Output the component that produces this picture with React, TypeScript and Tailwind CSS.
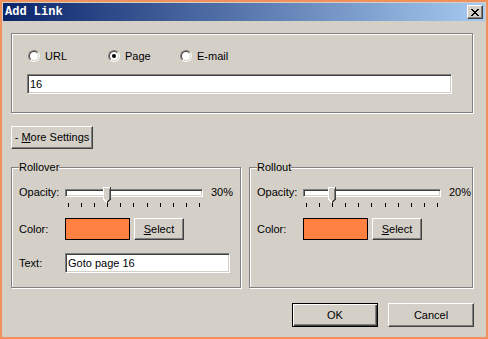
import React from "react"

const raised =
  "border border-t-white border-l-white border-r-[#404040] border-b-[#404040] shadow-[inset_-1px_-1px_0_#808080]"
const sunken =
  "border border-t-[#808080] border-l-[#808080] border-r-white border-b-white shadow-[inset_1px_1px_0_#404040,inset_-1px_-1px_0_#d4d0c8]"
const etched = "border border-[#808080] shadow-[inset_1px_1px_0_#fff,1px_1px_0_#fff]"

function CloseButton() {
  // 8x7 pixel X
  const rows = ["xx....xx", ".xx..xx.", "..xxxx..", "...xx...", "..xxxx..", ".xx..xx.", "xx....xx"]
  return (
    <div className={`flex h-[14px] w-[16px] items-center justify-center bg-[#d4d0c8] ${raised}`}>
      <svg width="8" height="7" viewBox="0 0 8 7" shapeRendering="crispEdges">
        {rows.map((r, y) =>
          r.split("").map((c, x) => (c === "x" ? <rect key={`${x}-${y}`} x={x} y={y} width="1" height="1" fill="#000" /> : null))
        )}
      </svg>
    </div>
  )
}

function Radio({ label, checked, width }: { label: string; checked?: boolean; width?: string }) {
  return (
    <div className={`flex h-[12px] items-center gap-[5px] ${width ?? ""}`}>
      <div className="h-[12px] w-[12px] shrink-0 rounded-full border border-t-[#808080] border-l-[#808080] border-r-white border-b-white">
        <div className="flex h-full w-full items-center justify-center rounded-full border border-t-[#404040] border-l-[#404040] border-r-[#d4d0c8] border-b-[#d4d0c8] bg-white">
          {checked && <div className="h-[4px] w-[4px] rounded-full bg-black" />}
        </div>
      </div>
      <span className="leading-[13px]">{label}</span>
    </div>
  )
}

function TextBox({ value, className }: { value: string; className: string }) {
  return (
    <div className={`flex items-center bg-white pl-[2px] leading-[13px] ${sunken} ${className}`}>
      {value}
    </div>
  )
}

function Button({ children, className, isDefault }: { children: React.ReactNode; className: string; isDefault?: boolean }) {
  const edge = isDefault
    ? "border border-black shadow-[inset_1px_1px_0_#fff,inset_-1px_-1px_0_#404040,inset_-2px_-2px_0_#808080]"
    : raised
  return (
    <div className={`flex items-center justify-center bg-[#d4d0c8] leading-[13px] ${edge} ${className}`}>
      {children}
    </div>
  )
}

function Slider({ value }: { value: number }) {
  const left = 3 + (value / 100) * 131 - 4
  return (
    <div className="relative h-[22px] w-[138px]">
      <div className={`mt-[3px] h-[8px] bg-white ${sunken}`} />
      <div className="mt-[6px] flex justify-between px-[3px]">
        {Array.from({ length: 11 }).map((_, i) => (
          <div key={i} className="h-[4px] w-px bg-black" />
        ))}
      </div>
      <svg
        className="absolute top-[1px]"
        style={{ left }}
        width="8"
        height="16"
        viewBox="0 0 8 16"
        shapeRendering="crispEdges"
      >
        <path d="M0 0H8V12L4 16L0 12Z" fill="#d4d0c8" />
        <path d="M0.5 12V0.5H7.5" stroke="#fff" fill="none" />
        <path d="M0.5 12L4 15.5" stroke="#fff" fill="none" />
        <path d="M7.5 0V12L4 15.5" stroke="#404040" fill="none" />
        <path d="M6.5 1.5V11.5" stroke="#808080" fill="none" />
      </svg>
    </div>
  )
}

function EffectGroup({ title, opacity, width, withText }: { title: string; opacity: number; width: string; withText?: boolean }) {
  return (
    <div className={`relative h-[121px] pl-[7px] pt-[18px] ${etched} ${width}`}>
      <span className="absolute -top-[7px] left-[7px] bg-[#d4d0c8] leading-[13px]">{title}</span>
      <div className="flex items-start">
        <span className="w-[46px] leading-[13px]">Opacity:</span>
        <Slider value={opacity} />
        <span className="ml-[8px] leading-[13px]">{opacity}%</span>
      </div>
      <div className="mt-[10px] flex h-[22px] items-center">
        <span className="w-[46px]">Color:</span>
        <div className="h-[22px] w-[65px] border border-black bg-[#ff8040]" />
        <Button className="ml-[4px] h-[22px] w-[50px]">
          <span>
            <u>S</u>elect
          </span>
        </Button>
      </div>
      {withText && (
        <div className="mt-[13px] flex items-center">
          <span className="w-[46px]">Text:</span>
          <TextBox value="Goto page 16" className="h-[20px] w-[165px]" />
        </div>
      )}
    </div>
  )
}

export default function App() {
  return (
    <div className="h-[339px] w-[488px] overflow-hidden border-2 border-[#f0905c] bg-[#d4d0c8] p-px font-['Liberation_Sans',Arial,sans-serif] text-[11px] text-black">
      <div className="flex h-[18px] items-center justify-between bg-[linear-gradient(to_right,#0a246a,#a6caf0)] px-[2px]">
        <span className="font-['Liberation_Mono','Courier_New',monospace] text-[12px] leading-[14px] font-bold text-white">
          Add Link
        </span>
        <CloseButton />
      </div>

      <div className="pl-[8px]">
        <div className={`mt-[12px] h-[80px] w-[462px] pl-[15px] pt-[16px] ${etched}`}>
          <div className="ml-px flex">
            <Radio label="URL" width="w-[80px]" />
            <Radio label="Page" checked width="w-[72px]" />
            <Radio label="E-mail" />
          </div>
          <TextBox value="16" className="mt-[12px] h-[20px] w-[425px]" />
        </div>

        <Button className="mt-[13px] h-[23px] w-[82px]">
          <span>
            - <u>M</u>ore Settings
          </span>
        </Button>

        <div className="mt-[18px] flex gap-[8px]">
          <EffectGroup title="Rollover" opacity={30} width="w-[230px]" withText />
          <EffectGroup title="Rollout" opacity={20} width="w-[224px]" />
        </div>

        <div className="mt-[15px] flex w-[463px] justify-end gap-[10px]">
          <Button isDefault className="h-[24px] w-[86px]">
            OK
          </Button>
          <Button className="h-[24px] w-[86px]">Cancel</Button>
        </div>
      </div>
    </div>
  )
}
